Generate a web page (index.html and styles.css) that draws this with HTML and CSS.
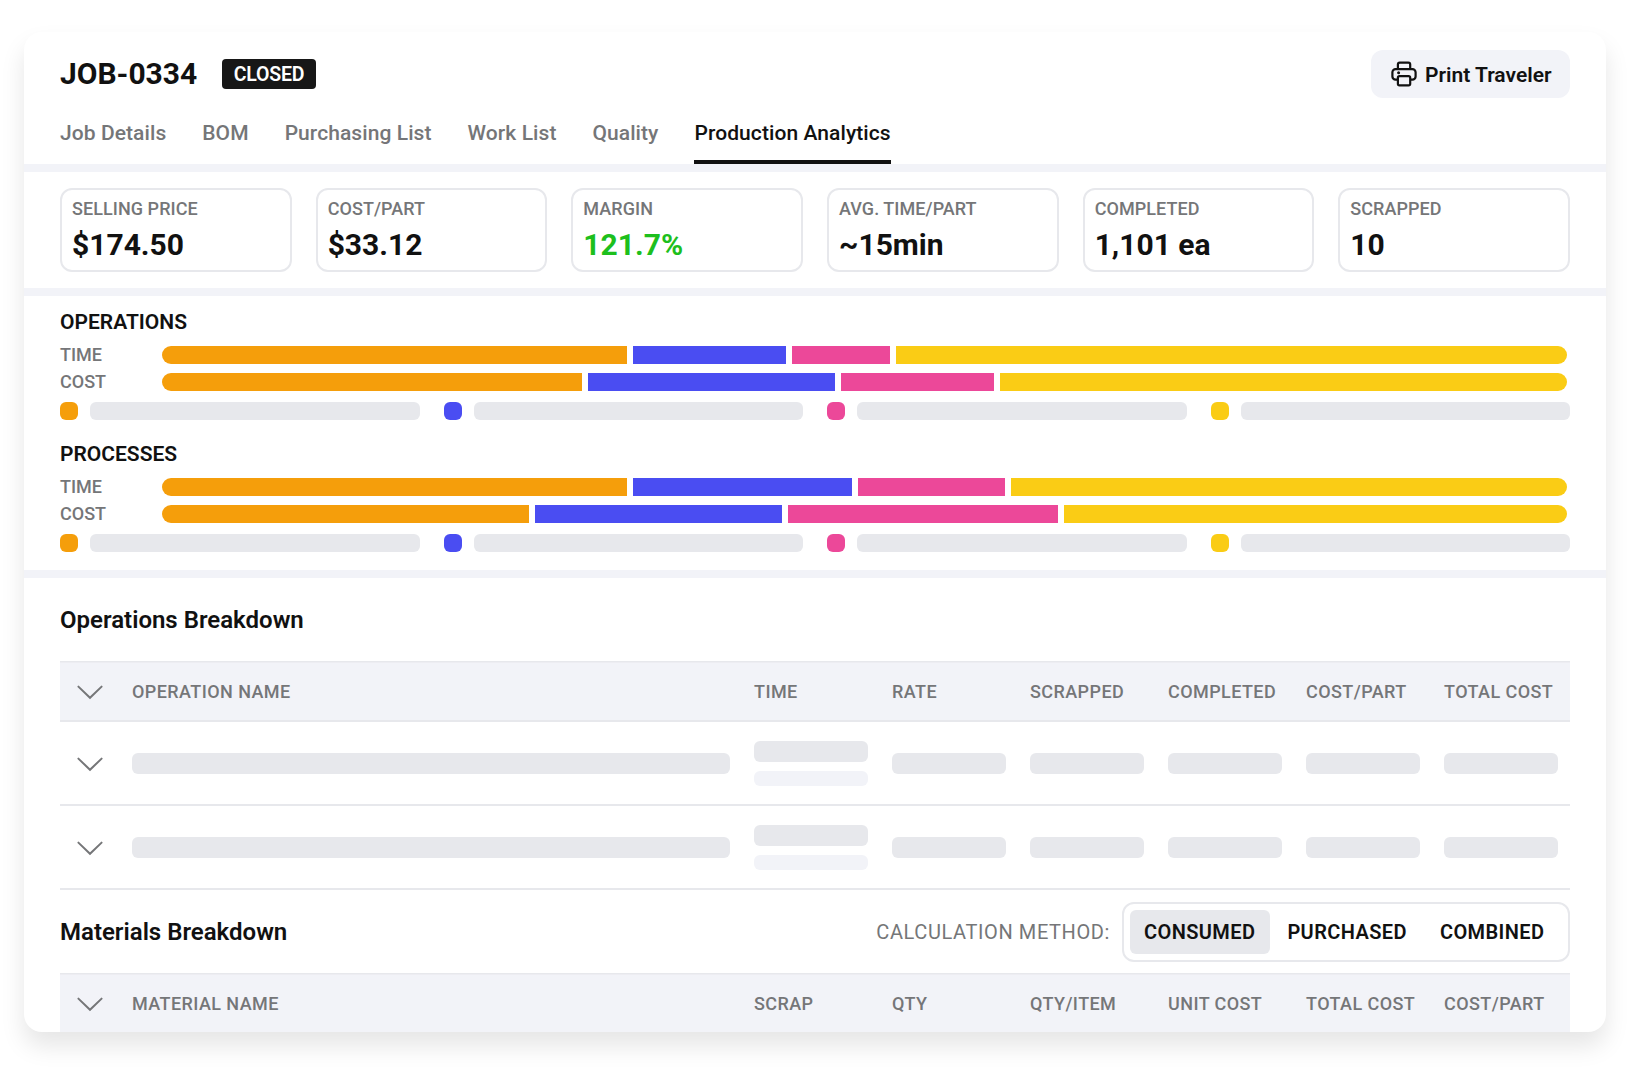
FILE: index.html
```
<!DOCTYPE html>
<html lang="en">
<head>
<meta charset="utf-8">
<title>JOB-0334</title>
<link rel="stylesheet" href="styles.css">
</head>
<body>
<svg width="0" height="0" class="defs">
	<symbol id="chevron" viewBox="0 0 28 16"><path d="M2.4 2.6 14 13.8 25.6 2.6"/></symbol>
</svg>
<main class="card">
	<header class="header">
		<div class="title-row">
			<h1>JOB-0334</h1>
			<span class="badge">CLOSED</span>
			<button class="print">
				<svg width="28" height="28" viewBox="0 0 28 28">
					<path d="M7.9 9V4.4a1.8 1.8 0 0 1 1.8-1.8h8.7a1.8 1.8 0 0 1 1.8 1.8V9"/>
					<path d="M7.6 19.6H5.6a3.2 3.2 0 0 1-3.2-3.2V12.3a3.2 3.2 0 0 1 3.2-3.2h16.8a3.2 3.2 0 0 1 3.2 3.2v4.1a3.2 3.2 0 0 1-3.2 3.2H20.5"/>
					<rect x="7.9" y="16.2" width="12.3" height="9.2" rx="1.6"/>
					<circle class="dot" cx="8.6" cy="12.7" r="1.5"/>
				</svg>
				<span>Print Traveler</span>
			</button>
		</div>
		<nav class="tabs">
			<a>Job Details</a>
			<a>BOM</a>
			<a>Purchasing List</a>
			<a>Work List</a>
			<a>Quality</a>
			<a class="active">Production Analytics</a>
		</nav>
	</header>

	<section class="stats">
		<div class="stat"><span>SELLING PRICE</span><b>$174.50</b></div>
		<div class="stat"><span>COST/PART</span><b>$33.12</b></div>
		<div class="stat"><span>MARGIN</span><b class="green">121.7%</b></div>
		<div class="stat"><span>AVG. TIME/PART</span><b>~15min</b></div>
		<div class="stat"><span>COMPLETED</span><b>1,101 ea</b></div>
		<div class="stat"><span>SCRAPPED</span><b>10</b></div>
	</section>

	<section class="charts">
		<div class="chart">
			<h3>OPERATIONS</h3>
			<div class="bar-row">
				<span>TIME</span>
				<div class="bar"><i class="orange" style="width:465px"></i><i class="blue" style="width:153px"></i><i class="pink" style="width:97.5px"></i><i class="yellow"></i></div>
			</div>
			<div class="bar-row">
				<span>COST</span>
				<div class="bar"><i class="orange" style="width:420px"></i><i class="blue" style="width:247px"></i><i class="pink" style="width:153px"></i><i class="yellow"></i></div>
			</div>
			<div class="legend">
				<div><i class="orange"></i><em></em></div>
				<div><i class="blue"></i><em></em></div>
				<div><i class="pink"></i><em></em></div>
				<div><i class="yellow"></i><em></em></div>
			</div>
		</div>
		<div class="chart">
			<h3>PROCESSES</h3>
			<div class="bar-row">
				<span>TIME</span>
				<div class="bar"><i class="orange" style="width:465px"></i><i class="blue" style="width:219px"></i><i class="pink" style="width:147px"></i><i class="yellow"></i></div>
			</div>
			<div class="bar-row">
				<span>COST</span>
				<div class="bar"><i class="orange" style="width:367px"></i><i class="blue" style="width:247px"></i><i class="pink" style="width:270px"></i><i class="yellow"></i></div>
			</div>
			<div class="legend">
				<div><i class="orange"></i><em></em></div>
				<div><i class="blue"></i><em></em></div>
				<div><i class="pink"></i><em></em></div>
				<div><i class="yellow"></i><em></em></div>
			</div>
		</div>
	</section>

	<section class="breakdown">
		<div class="section-title"><h2>Operations Breakdown</h2></div>
		<div class="row head">
			<svg class="chev"><use href="#chevron"/></svg>
			<span>OPERATION NAME</span>
			<span>TIME</span>
			<span>RATE</span>
			<span>SCRAPPED</span>
			<span>COMPLETED</span>
			<span>COST/PART</span>
			<span>TOTAL COST</span>
		</div>
		<div class="row">
			<svg class="chev"><use href="#chevron"/></svg>
			<em></em>
			<div><em></em><em class="light"></em></div>
			<em></em><em></em><em></em><em></em><em></em>
		</div>
		<div class="row">
			<svg class="chev"><use href="#chevron"/></svg>
			<em></em>
			<div><em></em><em class="light"></em></div>
			<em></em><em></em><em></em><em></em><em></em>
		</div>

		<div class="section-title materials">
			<h2>Materials Breakdown</h2>
			<span class="method">CALCULATION METHOD:</span>
			<div class="switch">
				<span class="on">CONSUMED</span>
				<span>PURCHASED</span>
				<span>COMBINED</span>
			</div>
		</div>
		<div class="row head">
			<svg class="chev"><use href="#chevron"/></svg>
			<span>MATERIAL NAME</span>
			<span>SCRAP</span>
			<span>QTY</span>
			<span>QTY/ITEM</span>
			<span>UNIT COST</span>
			<span>TOTAL COST</span>
			<span>COST/PART</span>
		</div>
	</section>
</main>
</body>
</html>
```
FILE: styles.css
```
*{
	box-sizing: border-box;
}
body{
	margin: 0;
	padding: 32px 24px 0;
	height: 1080px;
	overflow: hidden;
	background: #fff;
	color: #111;
	font-family: Roboto, "Liberation Sans", sans-serif;
	font-weight: 500;
}
h1, h2, h3{
	margin: 0;
}
i, em{
	display: block;
}
.defs{
	display: none;
}
.card{
	height: 1000px;
	overflow: hidden;
	border-radius: 18px;
	background: #fff;
	box-shadow: 0 14px 24px rgba(0,0,0,0.1);
}

/* header */
.header{
	height: 140px;
	padding: 18px 36px 0;
	border-bottom: 8px solid #f2f3f8;
}
.title-row{
	display: flex;
	align-items: center;
	height: 48px;
}
h1{
	width: 162px;
	font-size: 30px;
	line-height: 36px;
	font-weight: 700;
}
.badge{
	width: 94px;
	height: 30px;
	border-radius: 4px;
	background: #171717;
	color: #fff;
	font-size: 19.5px;
	line-height: 32px;
	font-weight: 600;
	letter-spacing: -0.2px;
	text-align: center;
}
.print{
	display: flex;
	align-items: center;
	gap: 7px;
	width: 199px;
	height: 48px;
	margin-left: auto;
	padding: 0 0 0 19px;
	border: 0;
	border-radius: 12px;
	background: #f2f3f8;
	color: #111;
	font: 600 21px/48px Roboto, sans-serif;
	white-space: nowrap;
}
.print span{
	padding-top: 1px;
}
.print svg{
	fill: none;
	stroke: #111;
	stroke-width: 2.2;
}
.print .dot{
	fill: #111;
	stroke: none;
}
.tabs{
	display: flex;
	gap: 36px;
	height: 66px;
}
.tabs a{
	padding-top: 20px;
	font-size: 21px;
	line-height: 30px;
	letter-spacing: 0.08px;
	color: #757678;
}
.tabs .active{
	color: #111;
	border-bottom: 4.5px solid #111;
}

/* stats */
.stats{
	display: grid;
	grid-template-columns: repeat(6, 1fr);
	gap: 24px;
	height: 124px;
	padding: 16px 36px;
	border-bottom: 8px solid #f2f3f8;
}
.stat{
	display: flex;
	flex-direction: column;
	height: 84px;
	padding: 8px 10px 0;
	border: 2px solid #e7e8ec;
	border-radius: 12px;
}
.stat span{
	font-size: 18px;
	line-height: 21px;
	letter-spacing: 0.06px;
	color: #757678;
}
.stat b{
	margin-top: 8px;
	font-size: 30px;
	line-height: 36px;
	font-weight: 700;
}
.stat .green{
	color: #1dbf1d;
}

/* charts */
.charts{
	height: 282px;
	padding: 14px 36px 0;
	border-bottom: 8px solid #f2f3f8;
}
.chart{
	height: 132px;
}
h3{
	height: 36px;
	font-size: 21px;
	line-height: 25px;
	font-weight: 600;
}
.bar-row{
	display: flex;
	height: 18px;
	margin-bottom: 9px;
}
.bar-row span{
	width: 102px;
	font-size: 18px;
	line-height: 18px;
	color: #757678;
}
.bar{
	display: flex;
	flex: 1;
	gap: 6px;
	margin-right: 3px;
	border-radius: 9px;
	overflow: hidden;
}
.bar .yellow{
	flex: 1;
}
.orange{
	background: #f59e0b;
}
.blue{
	background: #4a4df2;
}
.pink{
	background: #ec4899;
}
.yellow{
	background: #facc15;
}
.legend{
	display: grid;
	grid-template-columns: repeat(4, 1fr);
	gap: 24px;
	padding-top: 2px;
}
.legend div{
	display: flex;
	gap: 12px;
}
.legend i{
	width: 18px;
	height: 18px;
	border-radius: 6px;
}
.legend em{
	flex: 1;
	height: 18px;
	border-radius: 6px;
	background: #e7e8ec;
}

/* tables */
.breakdown{
	padding: 0 36px;
}
.section-title{
	display: flex;
	align-items: center;
	height: 82.5px;
	padding-top: 2px;
}
h2{
	font-size: 24px;
	line-height: 30px;
	font-weight: 600;
}
.row{
	display: grid;
	grid-template-columns: 48px 598px repeat(6, 114px);
	column-gap: 24px;
	align-items: center;
	height: 84px;
	padding-bottom: 1px;
	box-shadow: inset 0 -2px #e7e8ec;
}
.head{
	height: 61.5px;
	padding: 0;
	background: #f2f3f8;
	box-shadow: inset 0 -2px #e7e8ec, inset 0 1.5px #e7e8ec;
	font-size: 18px;
	letter-spacing: 0.42px;
	color: #757678;
	white-space: nowrap;
}
.chev{
	width: 28px;
	height: 16px;
	margin: 1px 0 0 16px;
	fill: none;
	stroke: #757678;
	stroke-width: 2;
	stroke-linecap: round;
}
.row em{
	height: 21px;
	border-radius: 6px;
	background: #e7e8ec;
}
.row .light{
	height: 15px;
	margin-top: 9px;
	background: #f2f3f8;
}
.method{
	margin: 0 12px 0 auto;
	font-size: 20px;
	font-weight: 400;
	letter-spacing: 0.6px;
	color: #757678;
}
.switch{
	display: flex;
	gap: 2px;
	width: 448px;
	height: 60px;
	padding: 6px;
	border: 2px solid #e7e8ec;
	border-radius: 12px;
}
.switch span{
	height: 44px;
	padding: 0 15px 0 14px;
	font-size: 20px;
	line-height: 45px;
	font-weight: 600;
	letter-spacing: 0.4px;
	border-radius: 6px;
}
.switch span + span{
	padding: 0 16px 0 15px;
}
.switch .on{
	background: #e7e8ec;
}
```
